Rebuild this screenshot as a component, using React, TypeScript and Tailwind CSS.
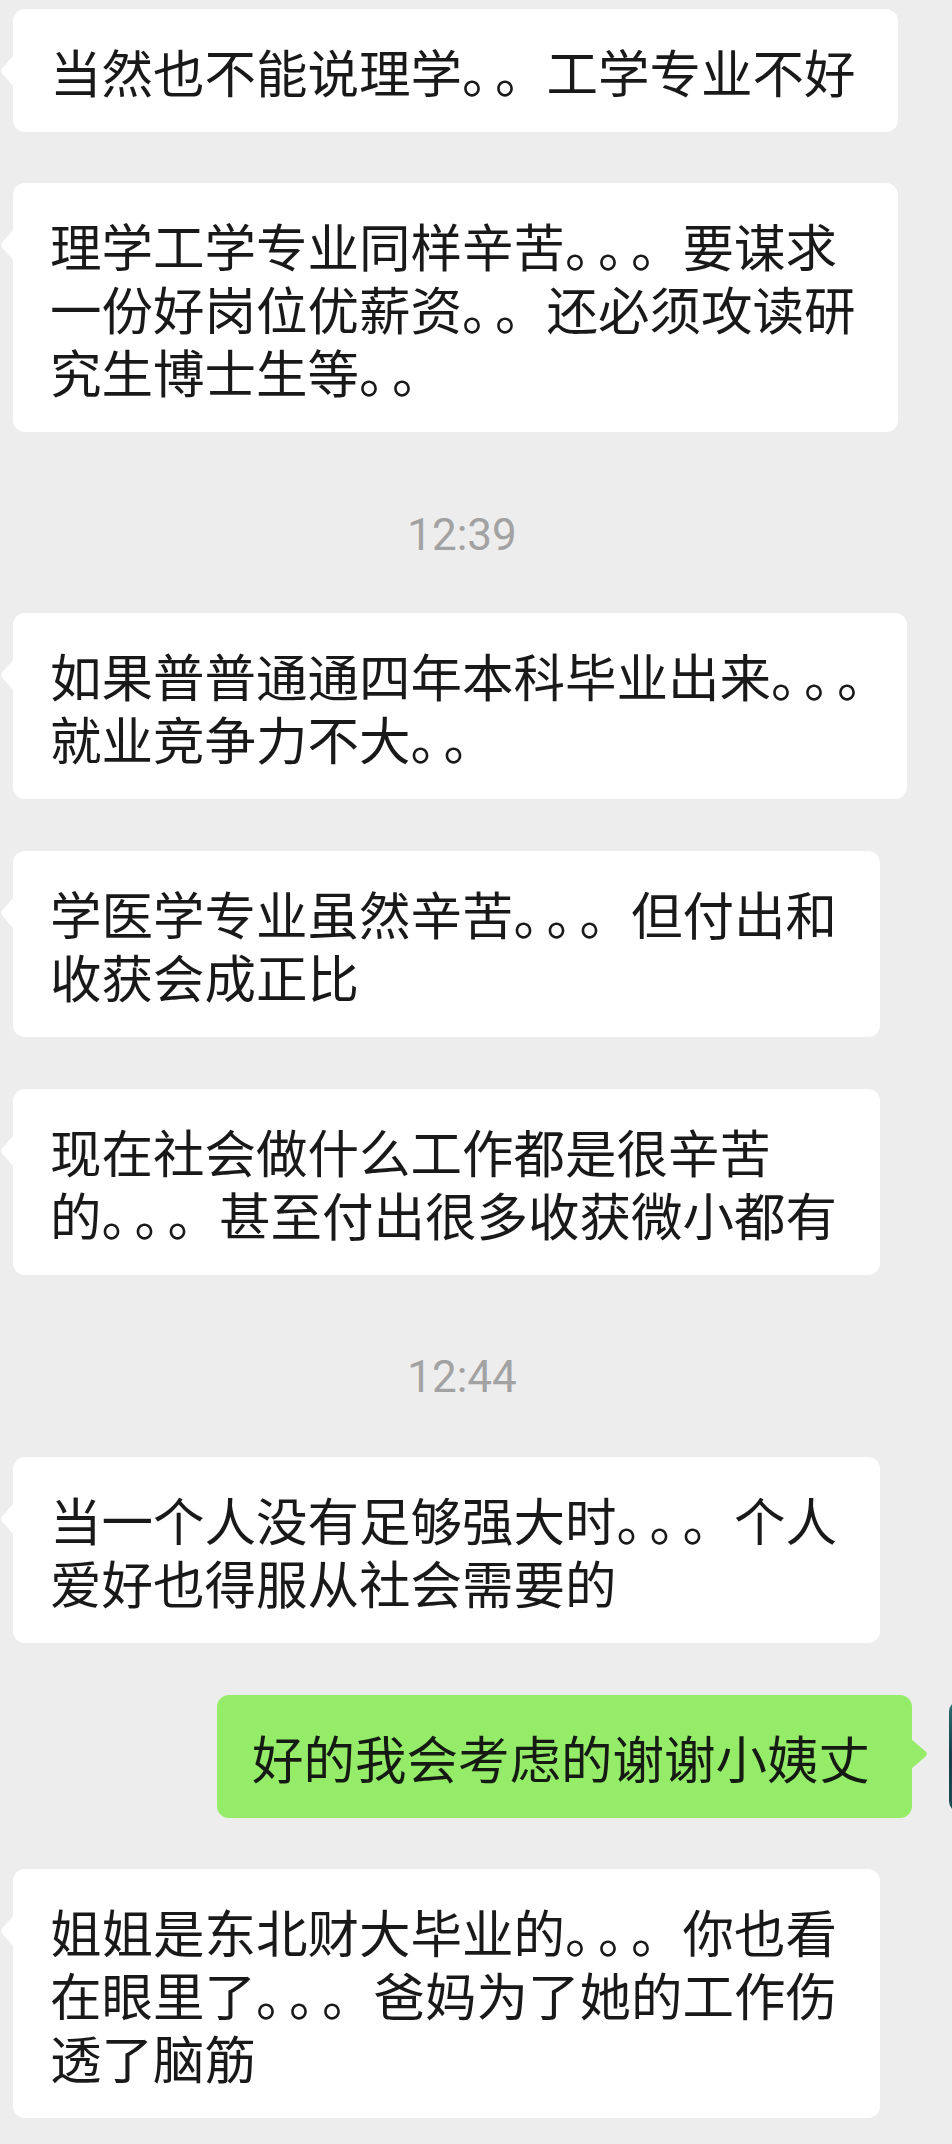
import React from "react";

function Line({ text }: { text: string }) {
  const parts: React.ReactNode[] = [];
  let buf = "";
  const chars = Array.from(text);
  chars.forEach((c, i) => {
    if (c === "。" && chars[i + 1] === "。") {
      if (buf) {
        parts.push(buf);
        buf = "";
      }
      parts.push(
        <span key={i} className="tracking-[-18.5px]">
          。
        </span>
      );
    } else {
      buf += c;
    }
  });
  if (buf) parts.push(buf);
  return <div className="whitespace-nowrap">{parts}</div>;
}

function LeftTail() {
  return (
    <svg
      className="absolute left-[-13px] top-[46px]"
      width="14"
      height="32"
      viewBox="0 0 14 32"
    >
      <path d="M14 0 L2.2 13.6 Q0 16 2.2 18.4 L14 32 Z" fill="#ffffff" />
    </svg>
  );
}

function RightTail() {
  return (
    <svg
      className="absolute right-[-16px] top-[44px]"
      width="17"
      height="30"
      viewBox="0 0 17 30"
    >
      <path d="M0 0 L14.6 12.6 Q17 15 14.6 17.4 L0 30 Z" fill="#95ec69" />
    </svg>
  );
}

function LeftBubble({ lines, w }: { lines: string[]; w: string }) {
  return (
    <div className="flex">
      <div
        className={`relative ml-[13px] ${w} rounded-[12px] bg-white pl-[37px] py-[30px] text-[51.5px] leading-[63px] text-[#191919]`}
      >
        <LeftTail />
        {lines.map((l, i) => (
          <Line key={i} text={l} />
        ))}
      </div>
    </div>
  );
}

function Time({ t, cls }: { t: string; cls: string }) {
  return (
    <div
      className={`flex justify-center pr-[28px] ${cls} font-['Roboto',sans-serif] text-[44px] leading-[50px] text-[#a2a2a2]`}
    >
      {t}
    </div>
  );
}

export default function App() {
  return (
    <div className="w-[952px] min-h-[2144px] overflow-hidden bg-[#ededed] pt-[9px] font-['Noto_Sans_CJK_SC',sans-serif] [text-spacing-trim:space-all]">
      <div className="flex flex-col">
        <LeftBubble w="w-[885px]" lines={["当然也不能说理学。。工学专业不好"]} />
        <div className="h-[51px]" />
        <LeftBubble
          w="w-[885px]"
          lines={[
            "理学工学专业同样辛苦。。。要谋求",
            "一份好岗位优薪资。。还必须攻读研",
            "究生博士生等。。",
          ]}
        />
        <Time t="12:39" cls="h-[181px] pt-[78px]" />
        <LeftBubble
          w="w-[894px]"
          lines={["如果普普通通四年本科毕业出来。。。", "就业竞争力不大。。"]}
        />
        <div className="h-[52px]" />
        <LeftBubble
          w="w-[867px]"
          lines={["学医学专业虽然辛苦。。。但付出和", "收获会成正比"]}
        />
        <div className="h-[52px]" />
        <LeftBubble
          w="w-[867px]"
          lines={["现在社会做什么工作都是很辛苦", "的。。。甚至付出很多收获微小都有"]}
        />
        <Time t="12:44" cls="h-[182px] pt-[77px]" />
        <LeftBubble
          w="w-[867px]"
          lines={["当一个人没有足够强大时。。。个人", "爱好也得服从社会需要的"]}
        />
        <div className="h-[52px]" />
        <div className="flex items-start">
          <div className="relative ml-[217px] w-[695px] shrink-0 rounded-[12px] bg-[#95ec69] pl-[35px] py-[30px] text-[51.5px] leading-[63px] text-[#151a12]">
            <RightTail />
            <Line text="好的我会考虑的谢谢小姨丈" />
          </div>
          <div className="ml-[37px] mt-[5px] h-[113px] w-[113px] shrink-0 rounded-[12px] bg-gradient-to-b from-[#2c6f72] via-[#163e4c] to-[#1d4d52]" />
        </div>
        <div className="h-[51px]" />
        <LeftBubble
          w="w-[867px]"
          lines={[
            "姐姐是东北财大毕业的。。。你也看",
            "在眼里了。。。爸妈为了她的工作伤",
            "透了脑筋",
          ]}
        />
      </div>
    </div>
  );
}
